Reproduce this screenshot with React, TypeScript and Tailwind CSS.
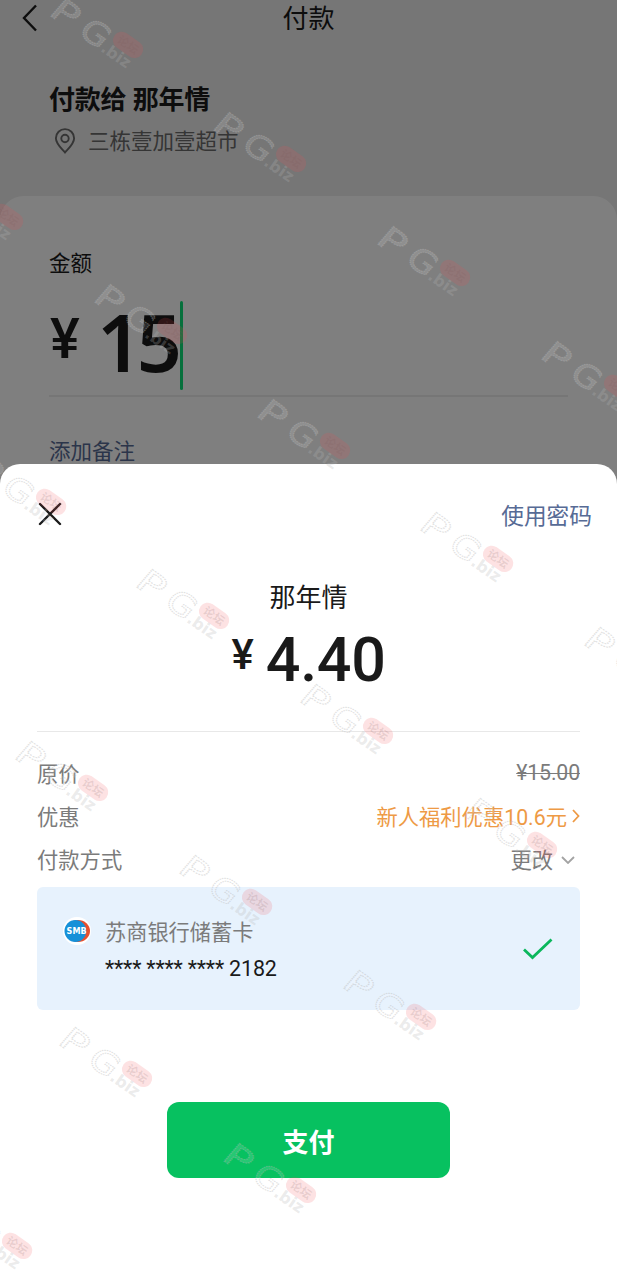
import type { ReactNode } from "react";

const watermarks = [
  [50, -4],
  [213, 110],
  [377, 224],
  [541, 339],
  [-70, 168],
  [94, 282],
  [257, 397],
  [420, 510],
  [584, 625],
  [-27, 453],
  [136, 567],
  [300, 682],
  [464, 796],
  [15, 739],
  [179, 853],
  [343, 968],
  [59, 1025],
  [223, 1141],
  [-61, 1197],
];

function Watermark({ x, y }: { x: number; y: number }) {
  return (
    <g transform={`translate(${x} ${y}) rotate(35)`}>
      <g
        fill="#fff"
        fillOpacity={0.14}
        stroke="#b2b2b2"
        strokeOpacity={0.38}
        strokeWidth={1.2}
        strokeDasharray="1.4 0.8"
        fontFamily="DejaVu Sans, sans-serif"
        fontSize={32}
      >
        <text transform="translate(8 16) skewX(-6) scale(1.38 1)">P</text>
        <text transform="translate(43.5 15.5) skewX(-6) scale(1.14 1)">G</text>
      </g>
      <text
        x={72}
        y={16}
        fill="#b4b4b4"
        fillOpacity={0.27}
        fontFamily="DejaVu Sans, sans-serif"
        fontWeight={700}
        fontSize={16}
      >
        .biz
      </text>
      <rect x={75.5} y={-13.5} width={33} height={17.5} rx={8.7} fill="#f04a50" fillOpacity={0.16} />
      <text
        x={92}
        y={-0.7}
        textAnchor="middle"
        fill="#7a5a5a"
        fillOpacity={0.16}
        fontFamily="Noto Sans CJK SC, sans-serif"
        fontWeight={700}
        fontSize={11.5}
      >
        论坛
      </text>
    </g>
  );
}

function DetailRow({ label, children }: { label: string; children: ReactNode }) {
  return (
    <div className="flex h-[43px] items-center justify-between text-[21.3px] text-[#7b7b7b]">
      <span>{label}</span>
      {children}
    </div>
  );
}

function BankLogo() {
  return (
    <svg className="h-7 w-7" viewBox="0 0 28 28">
      <circle cx="14" cy="14" r="14" fill="#fff" />
      <ellipse cx="15" cy="14" rx="12" ry="11" fill="#e8502e" />
      <ellipse cx="12.4" cy="14" rx="10.9" ry="11" fill="#1690d8" />
      <text
        x="13.6"
        y="17.2"
        textAnchor="middle"
        fill="#fff"
        fontFamily="DejaVu Sans, sans-serif"
        fontWeight="700"
        fontSize="8.4"
        textLength="20"
        lengthAdjust="spacingAndGlyphs"
      >
        SMB
      </text>
    </svg>
  );
}

function TransferPage() {
  return (
    <div className="flex h-full flex-col bg-[#ededed] text-[#1a1a1a]">
      <header className="grid h-[38px] grid-cols-3 items-center">
        <svg className="ml-5 h-8 w-5 -translate-y-[3px]" viewBox="0 0 20 32" fill="none" stroke="currentColor" strokeWidth="2.4">
          <path d="M16 4.5 4 17l12 12.5" />
        </svg>
        <h1 className="text-center text-[26px] leading-[39px]">付款</h1>
      </header>

      <div className="h-[158px] pt-[42px] pl-[49px]">
        <div className="text-[26px] leading-[40px] font-bold tracking-[-0.2px]">付款给 那年情</div>
        <div className="mt-1 flex h-[36px] items-center text-[21.5px] text-[#6a6a6a]">
          <svg className="ml-[5px] h-[26px] w-[22px] -translate-y-px" viewBox="0 0 22 26" fill="none" stroke="currentColor" strokeWidth="1.9">
            <path d="M11 24.5C8.2 21 1.9 16 1.9 10.2a9.1 9.1 0 0 1 18.2 0C20.1 16 13.8 21 11 24.5Z" />
            <circle cx="11" cy="10.5" r="3.7" />
          </svg>
          <span className="ml-3">三栋壹加壹超市</span>
        </div>
      </div>

      <div className="flex-1 rounded-t-3xl bg-white px-[49px] pt-[52px]">
        <div className="h-8 text-[21.5px] leading-8">金额</div>
        <div className="mt-[21px] flex h-[89px] font-medium">
          <span className="w-[48px] pl-px text-[56px] leading-[77px]">¥</span>
          <span className="w-[83px] font-['Noto_Sans'] text-[79px] leading-[82px] font-semibold tracking-[-5.5px]">15</span>
          <span className="w-[3px] rounded-full bg-[#0ce078]" />
        </div>
        <div className="mt-[5px] h-0.5 bg-[#ededed]" />
        <div className="mt-[39px] text-[21.5px] leading-8 text-[#576b95]">添加备注</div>
      </div>
    </div>
  );
}

function PaySheet() {
  return (
    <div className="absolute inset-x-0 bottom-0 h-[816px] rounded-t-[20px] bg-white px-[37px] text-[#1a1a1a]">
      <div className="-mr-3 flex h-[104px] items-center justify-between">
        <svg className="-mt-1 h-[26px] w-[26px]" viewBox="0 0 26 26" fill="none" stroke="currentColor" strokeWidth="2.4" strokeLinecap="round">
          <path d="M3 3l20 20M23 3 3 23" />
        </svg>
        <span className="pt-0.5 text-[22.7px] text-[#576b95]">使用密码</span>
      </div>

      <div className="mt-[10px] text-center text-[26px] leading-[40px]">那年情</div>
      <div className="mt-3 flex h-[60px] justify-center gap-3 font-medium">
        <span className="text-[42px] leading-[50px]">¥</span>
        <span className="text-[61px] leading-[60px] tracking-[-0.3px]">4.40</span>
      </div>

      <div className="mt-[41px] h-px bg-[#e8e8e8]" />

      <div className="pt-[21px]">
        <DetailRow label="原价">
          <span className="-mt-1 tracking-[-0.15px] line-through decoration-1">¥15.00</span>
        </DetailRow>
        <DetailRow label="优惠">
          <span className="flex items-center gap-[5px] text-[#ee9a45]">
            新人福利优惠10.6元
            <svg className="h-3.5 w-2 -translate-y-0.5" viewBox="0 0 8 14" fill="none" stroke="currentColor" strokeWidth="1.8">
              <path d="M1 1l5.5 6L1 13" />
            </svg>
          </span>
        </DetailRow>
        <DetailRow label="付款方式">
          <span className="flex items-center gap-2 pr-[5px]">
            更改
            <svg className="h-2 w-3.5 -translate-y-px" viewBox="0 0 14 8" fill="none" stroke="#a3a3a3" strokeWidth="1.8">
              <path d="M1 1l6 6 6-6" />
            </svg>
          </span>
        </DetailRow>
      </div>

      <div className="mt-[5px] flex h-[123px] rounded-md bg-[#e7f2fd] pt-7 pl-[26px]">
        <div className="mt-0.5">
          <BankLogo />
        </div>
        <div className="ml-3.5 flex-1">
          <div className="text-[21.2px] leading-9 text-[#7b7b7b]">苏商银行储蓄卡</div>
          <div className="text-[21.5px] leading-9 tracking-[-0.2px]">**** **** **** 2182</div>
        </div>
        <svg className="mt-[23px] mr-[26px] h-[22px] w-[32px]" viewBox="0 0 32 22" fill="none" stroke="#0ab75c" strokeWidth="2.8">
          <path d="M2 11.5 10.5 19.5 29.5 1.5" />
        </svg>
      </div>

      <button className="mx-auto mt-[92px] block h-[76px] w-[283px] rounded-xl bg-[#07c160] pt-1.5 text-[26px] font-bold text-white">
        支付
      </button>
    </div>
  );
}

export default function App() {
  return (
    <div className="relative h-[1280px] w-[617px] overflow-hidden font-['Roboto','Noto_Sans_CJK_SC',sans-serif]">
      <TransferPage />
      <div className="absolute inset-0 bg-black/50" />
      <PaySheet />
      <svg className="pointer-events-none absolute inset-0" width="617" height="1280" viewBox="0 0 617 1280">
        {watermarks.map(([x, y]) => (
          <Watermark key={`${x}-${y}`} x={x} y={y} />
        ))}
      </svg>
    </div>
  );
}
